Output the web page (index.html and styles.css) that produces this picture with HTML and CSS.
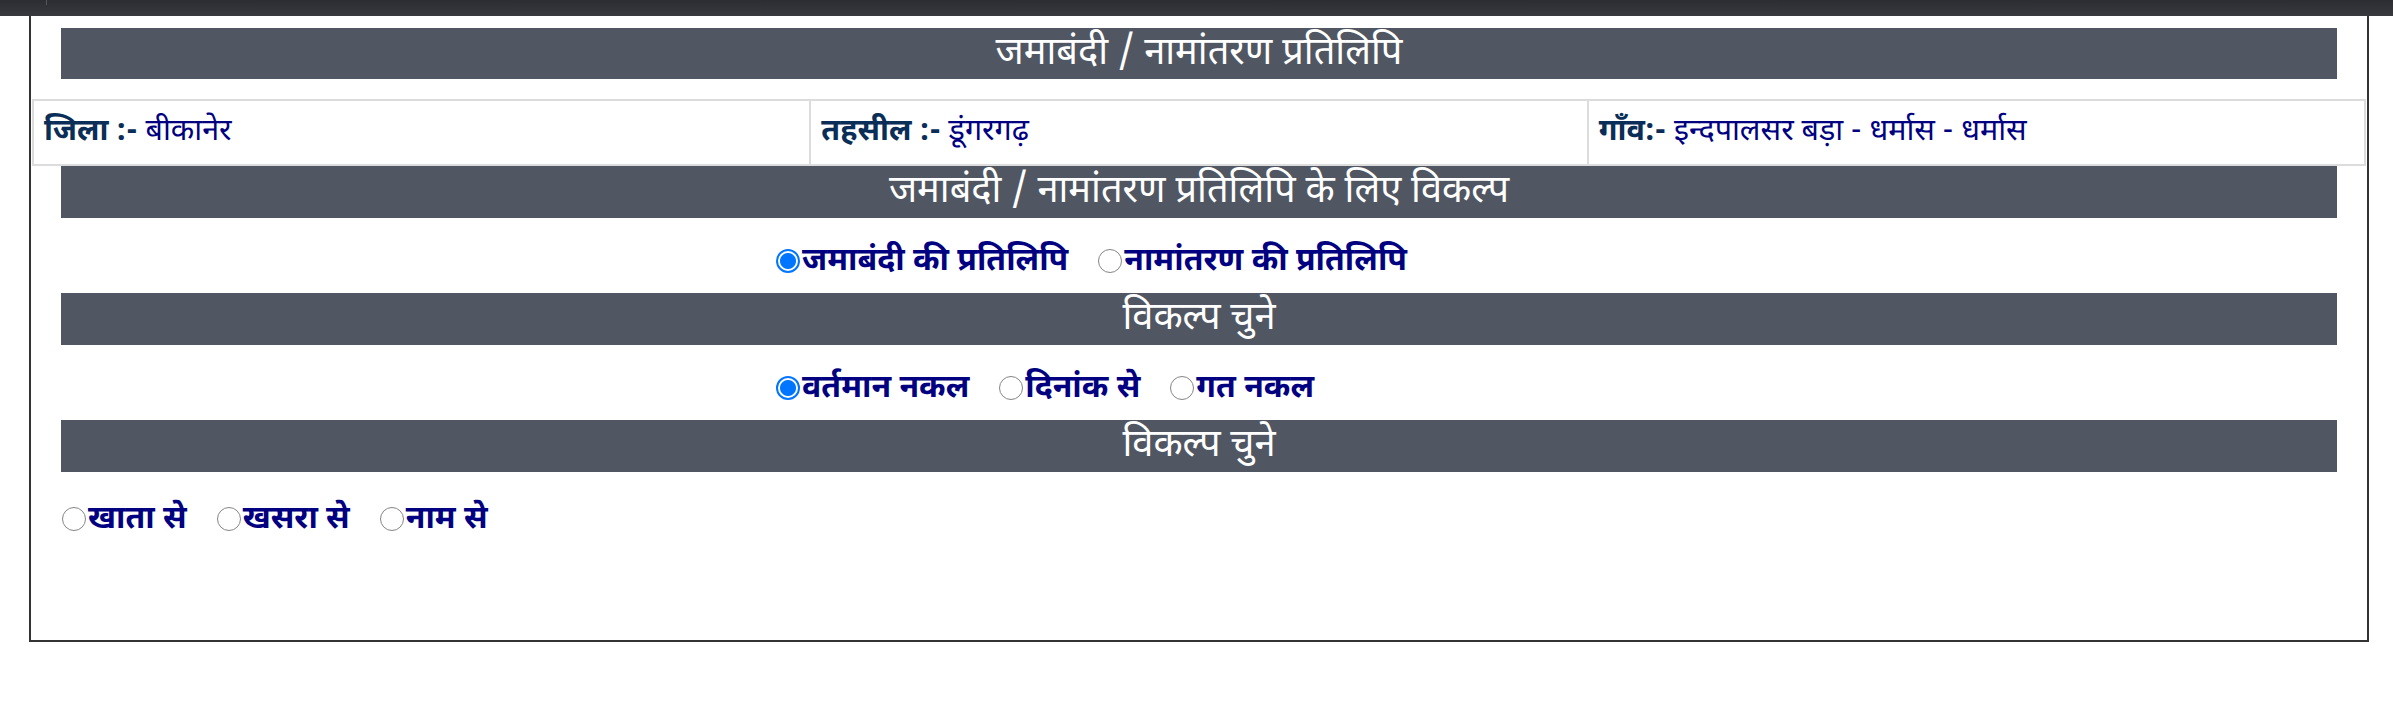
FILE: index.html
```html
<!DOCTYPE html>
<html lang="hi">
<head>
<meta charset="utf-8">
<title>जमाबंदी / नामांतरण प्रतिलिपि</title>
<link rel="stylesheet" href="styles.css">
</head>
<body>
<div class="topbar"><span class="tabmark"></span></div>
<div class="panel">
  <div class="bar bar-main">जमाबंदी / नामांतरण प्रतिलिपि</div>
  <table class="info">
    <tr>
      <td><span class="lbl">जिला :-</span> <span class="val">बीकानेर</span></td>
      <td><span class="lbl">तहसील :-</span> <span class="val">डूंगरगढ़</span></td>
      <td><span class="lbl">गाँव:-</span> <span class="val">इन्दपालसर बड़ा - धर्मास - धर्मास</span></td>
    </tr>
  </table>
  <div class="bar">जमाबंदी / नामांतरण प्रतिलिपि के लिए विकल्प</div>
  <div class="opts opts-mid">
    <label class="opt"><input type="radio" name="a" checked><span>जमाबंदी की प्रतिलिपि</span></label>
    <label class="opt"><input type="radio" name="a"><span>नामांतरण की प्रतिलिपि</span></label>
  </div>
  <div class="bar">विकल्प चुने</div>
  <div class="opts opts-mid">
    <label class="opt"><input type="radio" name="b" checked><span>वर्तमान नकल</span></label>
    <label class="opt"><input type="radio" name="b"><span>दिनांक से</span></label>
    <label class="opt"><input type="radio" name="b"><span>गत नकल</span></label>
  </div>
  <div class="bar">विकल्प चुने</div>
  <div class="opts opts-left">
    <label class="opt"><input type="radio" name="c"><span>खाता से</span></label>
    <label class="opt"><input type="radio" name="c"><span>खसरा से</span></label>
    <label class="opt"><input type="radio" name="c"><span>नाम से</span></label>
  </div>
</div>
</body>
</html>
```
FILE: styles.css
```css
html, body {
  margin: 0;
  padding: 0;
  background: #ffffff;
  font-family: "Noto Sans Devanagari", "Noto Sans", "DejaVu Sans", sans-serif;
}

.topbar {
  height: 16px;
  background: linear-gradient(#2c2d33, #38393f);
  position: relative;
}

.tabmark {
  position: absolute;
  left: 46px;
  top: 0;
  width: 1px;
  height: 5px;
  background: #55565c;
}

.panel {
  margin-left: 29px;
  width: 2336px;
  height: 612px;
  border: 2px solid #333333;
  border-top: none;
  padding-top: 12px;
  box-sizing: content-box;
}

.bar {
  margin: 0 30px;
  height: 52px;
  background: #515762;
  color: #ffffff;
  font-size: 38px;
  line-height: 54px;
  text-align: center;
  overflow: hidden;
}

.bar-main {
  height: 51px;
}

.info {
  margin: 20px 1px 0;
  width: 2334px;
  border-collapse: collapse;
  table-layout: fixed;
}

.info td {
  border: 2px solid #dcdcdc;
  height: 63px;
  padding: 0 10px;
  font-size: 30.5px;
  line-height: 40px;
  vertical-align: middle;
}

.lbl {
  font-weight: bold;
  color: #0a2e57;
}

.val {
  color: #000080;
}

.opts {
  display: flex;
  align-items: center;
  gap: 29px;
  padding-top: 12px;
  height: 63px;
  font-size: 32px;
  font-weight: bold;
  color: #000080;
}

.opts-mid {
  padding-left: 744px;
}

.opts-left {
  padding-left: 30px;
  padding-top: 30px;
  height: 36px;
}

.opt {
  display: flex;
  align-items: center;
}

.opt input {
  appearance: none;
  -webkit-appearance: none;
  flex: none;
  box-sizing: border-box;
  width: 24px;
  height: 24px;
  margin: 0 2px 2px 1px;
  border: 1.5px solid #858585;
  border-radius: 50%;
  background: #ffffff;
}

.opt input:checked {
  border: 2px solid #0075ff;
  background: radial-gradient(circle, #0075ff 0 7.5px, #ffffff 8.5px);
}
```
